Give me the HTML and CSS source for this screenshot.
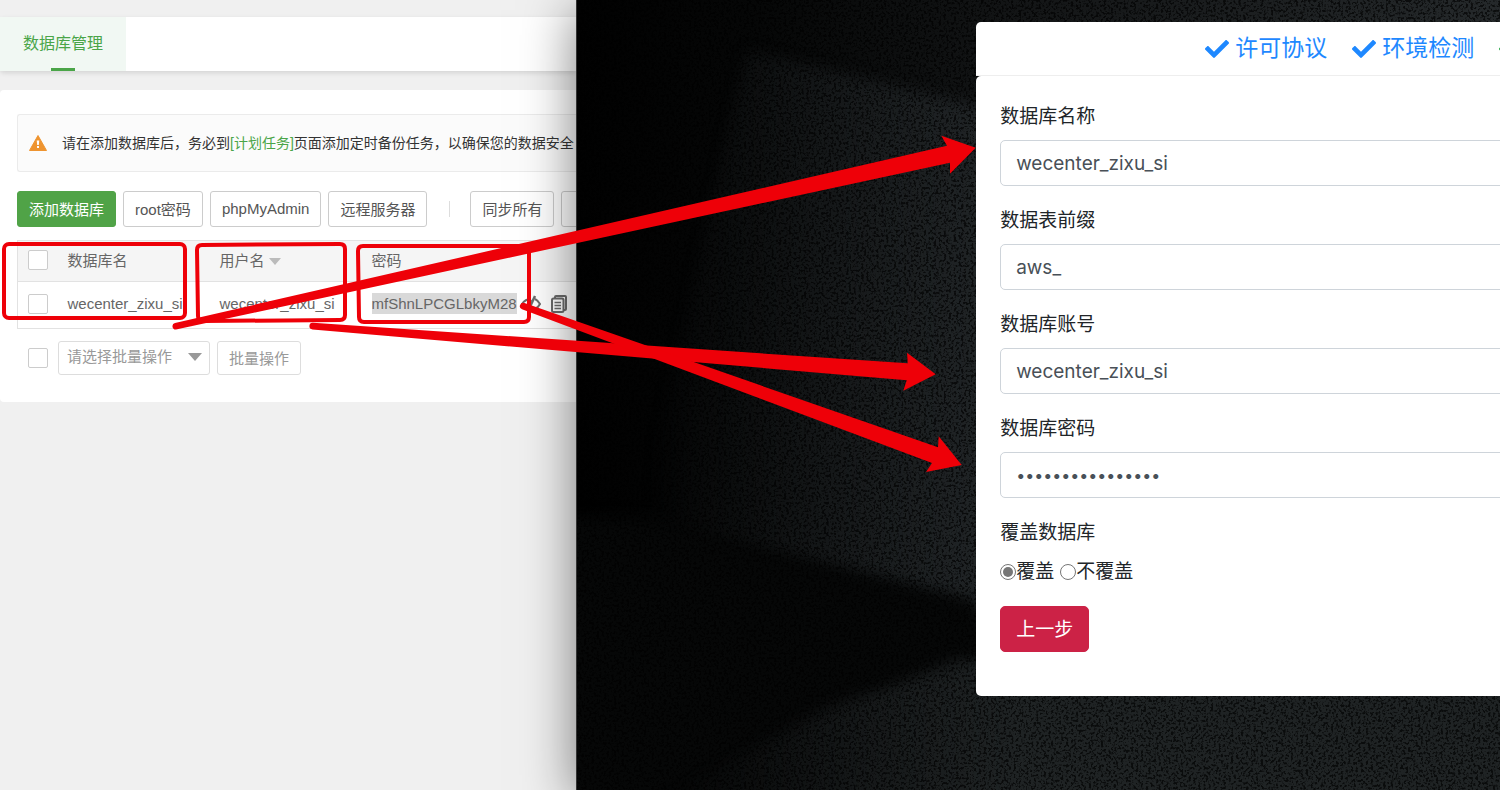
FILE: index.html
```
<!DOCTYPE html>
<html lang="zh-CN">
<head>
<meta charset="UTF-8">
<meta name="viewport" content="width=device-width, initial-scale=1.0">
<title>数据库管理</title>
<link rel="stylesheet" href="styles.css">
</head>
<body>

<div class="stage">

  <main class="panel">
    <nav class="tabs">
      <a class="tab active" href="#">数据库管理</a>
    </nav>

    <section class="card">
      <div class="notice">
        <svg class="warn" viewBox="0 0 18 16">
          <path d="M9 0.5 L17.5 15.5 H0.5 Z" fill="#ee9430" stroke="#ee9430" stroke-linejoin="round"/>
          <path d="M7.7 5.5 h2.6 l-.5 4.6 h-1.6 z M8 11 h2 v2 h-2 z" fill="#fff"/>
        </svg>
        <p>请在添加数据库后，务必到<a href="#">[计划任务]</a>页面添加定时备份任务，以确保您的数据安全</p>
      </div>

      <div class="toolbar">
        <button class="btn btn-green">添加数据库</button>
        <button class="btn">root密码</button>
        <button class="btn">phpMyAdmin</button>
        <button class="btn">远程服务器</button>
        <span class="divider"></span>
        <button class="btn">同步所有</button>
        <button class="btn btn-more" aria-label="更多"></button>
      </div>

      <table class="db-table">
        <colgroup>
          <col class="col-check">
          <col class="col-text">
          <col class="col-text">
          <col>
        </colgroup>
        <thead>
          <tr>
            <th><input type="checkbox" class="check" aria-label="全选"></th>
            <th>数据库名</th>
            <th>用户名 <span class="caret"></span></th>
            <th>密码</th>
          </tr>
        </thead>
        <tbody>
          <tr>
            <td><input type="checkbox" class="check" aria-label="wecenter_zixu_si"></td>
            <td>wecenter_zixu_si</td>
            <td>wecenter_zixu_si</td>
            <td>
              <div class="secret">
                <span class="selected">mfShnLPCGLbkyM28</span>
                <svg class="eye" viewBox="0 0 20 18" fill="none" stroke="#6b6b6b" stroke-width="2">
                  <path d="M7 14 C4 13 2 11 1 9 C3 6 6 4 10 4"/>
                  <path d="M14 4 C17 5.500 18 7.500 19 9 C18 11 16 13 14 14"/>
                  <path d="M14 1 L7 16" stroke-width="2.500"/>
                  <path d="M6 9 a4 4 0 0 1 5-4 l-3 7 z" fill="#6b6b6b" stroke="none"/>
                </svg>
                <svg class="copy" viewBox="0 0 16 18" fill="none" stroke="#6b6b6b" stroke-width="2">
                  <path d="M4 3 V2 Q4 1 5 1 H14 Q15 1 15 2 V14 Q15 15 14 15 H13"/>
                  <rect x="1" y="3.500" width="11.500" height="13.500" rx="1.500"/>
                  <path d="M3.500 7.500 H10 M3.500 10.500 H10 M3.500 13.500 H10" stroke-width="1.300"/>
                </svg>
              </div>
            </td>
          </tr>
        </tbody>
      </table>

      <div class="batch">
        <input type="checkbox" class="check" aria-label="批量选择">
        <div class="select-wrap">
          <select aria-label="批量操作">
            <option>请选择批量操作</option>
          </select>
        </div>
        <button class="btn btn-muted">批量操作</button>
      </div>
    </section>
  </main>

  <section class="installer">
    <svg class="backdrop" viewBox="0 0 924 790" preserveAspectRatio="none">
      <defs>
        <linearGradient id="base" x1="0" x2="1" y1="0" y2="0">
          <stop offset="0" stop-color="#010101"/>
          <stop offset=".2" stop-color="#060707"/>
          <stop offset=".5" stop-color="#141617"/>
          <stop offset="1" stop-color="#25292b"/>
        </linearGradient>
        <linearGradient id="beam" gradientUnits="userSpaceOnUse" x1="70" x2="420" y1="0" y2="0">
          <stop offset="0" stop-color="#1e2224" stop-opacity="0"/>
          <stop offset="1" stop-color="#212527"/>
        </linearGradient>
        <linearGradient id="floor" gradientUnits="userSpaceOnUse" x1="60" x2="440" y1="0" y2="0">
          <stop offset="0" stop-color="#191c1d" stop-opacity="0"/>
          <stop offset="1" stop-color="#1f2324"/>
        </linearGradient>
        <filter id="soft" color-interpolation-filters="sRGB">
          <feGaussianBlur stdDeviation="7"/>
        </filter>
        <filter id="grain" x="0" y="0" width="100%" height="100%">
          <feTurbulence type="fractalNoise" baseFrequency=".4" numOctaves="2" seed="4"/>
          <feColorMatrix values="0 0 0 0 0  0 0 0 0 0  0 0 0 0 0  6 0 0 0 -2.900"/>
        </filter>
      </defs>
      <rect width="924" height="790" fill="url(#base)"/>
      <g filter="url(#soft)">
        <path d="M170 50 L400 106 L924 230 V620 H400 L60 522 Z" fill="url(#beam)"/>
        <path d="M60 516 L400 600 L420 670 L250 700 L60 810 H-20 V516 Z" fill="#060707"/>
        <path d="M60 810 L250 710 L380 660 H940 V810 Z" fill="url(#floor)"/>
      </g>
      <rect width="924" height="790" filter="url(#grain)" opacity=".65"/>
    </svg>

    <div class="wizard">
      <header class="steps">
        <span class="step">
          <svg viewBox="0 0 512 512"><path fill="currentColor" d="M173.898 439.404l-166.400-166.400c-9.997-9.997-9.997-26.206 0-36.204l36.203-36.204c9.997-9.998 26.207-9.998 36.204 0L192 312.690 432.095 72.596c9.997-9.997 26.207-9.997 36.204 0l36.203 36.204c9.997 9.997 9.997 26.206 0 36.204l-294.400 294.401c-9.998 9.997-26.207 9.997-36.204-.001z"/></svg>
          许可协议
        </span>
        <span class="step">
          <svg viewBox="0 0 512 512"><path fill="currentColor" d="M173.898 439.404l-166.400-166.400c-9.997-9.997-9.997-26.206 0-36.204l36.203-36.204c9.997-9.998 26.207-9.998 36.204 0L192 312.690 432.095 72.596c9.997-9.997 26.207-9.997 36.204 0l36.203 36.204c9.997 9.997 9.997 26.206 0 36.204l-294.400 294.401c-9.998 9.997-26.207 9.997-36.204-.001z"/></svg>
          环境检测
        </span>
        <span class="step current">
          <svg viewBox="0 0 512 512"><path fill="currentColor" d="M173.898 439.404l-166.400-166.400c-9.997-9.997-9.997-26.206 0-36.204l36.203-36.204c9.997-9.998 26.207-9.998 36.204 0L192 312.690 432.095 72.596c9.997-9.997 26.207-9.997 36.204 0l36.203 36.204c9.997 9.997 9.997 26.206 0 36.204l-294.400 294.401c-9.998 9.997-26.207 9.997-36.204-.001z"/></svg>
        </span>
      </header>

      <form class="setup">
        <div class="field">
          <label for="dbname">数据库名称</label>
          <input type="text" id="dbname" value="wecenter_zixu_si">
        </div>
        <div class="field">
          <label for="prefix">数据表前缀</label>
          <input type="text" id="prefix" value="aws_">
        </div>
        <div class="field">
          <label for="dbuser">数据库账号</label>
          <input type="text" id="dbuser" value="wecenter_zixu_si">
        </div>
        <div class="field">
          <label for="dbpass">数据库密码</label>
          <input type="password" id="dbpass" value="mfShnLPCGLbkyM28">
        </div>
        <fieldset class="field">
          <legend>覆盖数据库</legend>
          <div class="radios">
            <label><input type="radio" name="cover" checked>覆盖</label>
            <label><input type="radio" name="cover">不覆盖</label>
          </div>
        </fieldset>
        <button type="button" class="btn-prev">上一步</button>
      </form>
    </div>
  </section>

  <!-- red boxes and arrows linking the two panels -->
  <svg class="marks" viewBox="0 0 1500 790" preserveAspectRatio="none">
    <g fill="none" stroke="#ee0008" stroke-width="4" stroke-linejoin="round">
      <rect x="4" y="244" width="181" height="74" rx="5"/>
      <path d="M202 245 L340 244 Q345 244 345 249 V315 Q345 320 340 320 L203 321 Q198 321 198 316 L197 250 Q197 245 202 245 Z"/>
      <path d="M363 246 H524 Q529 246 529 251 V317 Q529 322 524 322 H364 Q359 322 359 317 L358 251 Q358 246 363 246 Z"/>
    </g>
    <g fill="#ee0008">
      <path d="M175 323 L947 145.700 L941.300 135.700 L975.700 147.700 L950 173.700 V162.700 L176 329.500 A3.300 3.300 0 0 1 175 323 Z"/>
      <path d="M313 322.800 L907.700 363.300 L907 352.700 L935.700 374.300 L903.300 390.700 L906.700 380.300 L312.500 329.500 A3.300 3.300 0 0 1 313 322.800 Z"/>
      <path d="M524.500 303 L938 447.300 L938.700 436.300 L961.700 465 L926 472 L932 463 L522 309.300 A3.300 3.300 0 0 1 524.500 303 Z"/>
    </g>
  </svg>

</div>

</body>
</html>
```
FILE: styles.css
```
* {
  box-sizing: border-box;
}

body {
  margin: 0;
  font-family: "Liberation Sans", "Noto Sans CJK SC", sans-serif;
  font-size: 15px;
  color: #333;
  background: #f0f0f0;
}

button, input, select {
  font: inherit;
}

a {
  color: #4aa548;
  text-decoration: none;
}

.stage {
  position: relative;
  display: grid;
  grid-template-columns: 38.4% 1fr;
  min-height: 100vh;
  overflow: hidden;
}

/* left side */
.panel {
  min-width: 0;
  padding-top: 17px;
  overflow: hidden;
  white-space: nowrap;
}

.tabs {
  display: flex;
  height: 54px;
  background: #fff;
  border-radius: 4px 0 0 4px;
  box-shadow: 0 2px 5px rgba(0, 0, 0, .12);
}

.tab {
  display: flex;
  flex-direction: column;
  align-items: center;
  justify-content: space-between;
  padding: 0 23px;
  font-size: 16px;
  line-height: 54px;
  background: #f1f8f3;
}

.tab.active::after {
  content: "";
  width: 24px;
  height: 3px;
  margin-top: -3px;
  background: #4aa548;
}

.card {
  margin-top: 19px;
  padding: 24px 0 27px 17px;
  background: #fff;
  border-radius: 4px 0 0 4px;
}

.notice {
  display: flex;
  align-items: center;
  gap: 15px;
  height: 58px;
  padding-left: 11px;
  font-size: 14px;
  background: #fbfbfb;
  border: 1px solid #ebebeb;
  border-right: 0;
  border-radius: 3px 0 0 3px;
}

.notice p {
  margin: 0;
  padding-bottom: 2px;
}

.warn {
  flex: none;
  width: 18px;
  height: 16px;
}

.toolbar {
  display: flex;
  align-items: center;
  gap: 7px;
  margin: 19px 0 13px;
}

.btn {
  flex: none;
  height: 36px;
  padding: 0 11px 2px;
  color: #555;
  background: #fff;
  border: 1px solid #ccc;
  border-radius: 3px;
}

.btn-green {
  color: #fff;
  background: #50a347;
  border-color: #50a347;
}

.btn-more {
  width: 70px;
}

.divider {
  flex: none;
  width: 1px;
  height: 16px;
  margin: 0 13px 0 15px;
  background: #ddd;
}

.db-table {
  width: 700px;
  table-layout: fixed;
  border-collapse: collapse;
  border: 1px solid #e2e2e2;
  color: #666;
}

.col-check {
  width: 40px;
}

.col-text {
  width: 152px;
}

.db-table th,
.db-table td {
  padding: 0 0 3px 10px;
  font-weight: normal;
  text-align: left;
  border-bottom: 1px solid #e2e2e2;
}

.db-table th {
  height: 41px;
  background: #f5f5f5;
}

.db-table td {
  height: 47px;
}

.check {
  display: block;
  flex: none;
  appearance: none;
  width: 20px;
  height: 20px;
  margin: 0;
  background: #fff;
  border: 1px solid #ccc;
  border-radius: 2px;
}

.caret {
  display: inline-block;
  border: 6px solid transparent;
  border-top: 7px solid #bbb;
  border-bottom: 0;
  vertical-align: 1px;
}

.secret {
  display: flex;
  align-items: center;
}

.selected {
  line-height: 21px;
  background: #d9d9d9;
}

.eye {
  width: 20px;
  height: 18px;
  margin: 0 10px 0 4px;
}

.copy {
  width: 16px;
  height: 18px;
}

.batch {
  display: flex;
  align-items: center;
  gap: 7px;
  margin-top: 12px;
  padding-left: 11px;
}

.select-wrap {
  position: relative;
  width: 152px;
  margin-left: 3px;
}

.select-wrap::after {
  content: "";
  position: absolute;
  top: 12px;
  right: 8px;
  border: 7px solid transparent;
  border-top: 8px solid #999;
  border-bottom: 0;
  pointer-events: none;
}

.select-wrap select {
  display: block;
  appearance: none;
  width: 100%;
  height: 34px;
  padding: 0 8px 3px;
  color: #999;
  background: #fff;
  border: 1px solid #ddd;
  border-radius: 3px;
}

.btn-muted {
  height: 34px;
  color: #999;
  border-color: #ddd;
}

/* right side */
.installer {
  position: relative;
  min-width: 0;
  padding: 22px 0 0 43.2%;
  background: #000;
  border-left: 1px solid #333;
  box-shadow: 0 10px 50px rgba(0, 0, 0, .5);
}

.backdrop {
  position: absolute;
  inset: 0;
  width: 100%;
  height: 100%;
}

.wizard {
  position: relative;
  width: 720px;
  font-family: Inter, "Noto Sans CJK SC", sans-serif;
  font-size: 19px;
  line-height: 29px;
  color: #212529;
}

.steps {
  display: flex;
  align-items: center;
  gap: 25px;
  height: 54px;
  padding-left: 229px;
  font-size: 23px;
  color: #1e88ff;
  background: #fff;
  border-bottom: 1px solid #eee;
  border-radius: 5px 5px 0 0;
}

.step {
  display: flex;
  align-items: center;
  gap: 6px;
}

.step svg {
  width: 24px;
  height: 24px;
}

.step.current {
  color: #28a745;
}

.setup {
  padding: 26px 24px 44px;
  background: #fff;
  border-radius: 5px;
}

.field {
  margin: 0 0 20px;
  padding: 0;
  border: 0;
}

.field > label,
.field legend {
  display: block;
  margin-bottom: 9px;
  padding: 0;
}

.field > input {
  display: block;
  width: 100%;
  height: 46px;
  padding: 0 15px;
  color: #495057;
  border: 1px solid #ced4da;
  border-radius: 5px;
}

.field > input[type="password"] {
  font-size: 16px;
}

.radios {
  display: flex;
  gap: 6px;
  padding-top: 1px;
}

.radios label {
  display: flex;
  align-items: center;
}

.radios input {
  appearance: none;
  width: 16px;
  height: 16px;
  margin: 0;
  padding: 2px;
  background: #fff content-box;
  border: 1px solid #767676;
  border-radius: 50%;
}

.radios input:checked {
  background-color: #767676;
}

.btn-prev {
  height: 46px;
  padding: 0 15px;
  color: #fff;
  background: #cc2246;
  border: 1px solid #cc2246;
  border-radius: 5px;
}

.marks {
  position: absolute;
  inset: 0;
  width: 100%;
  height: 100%;
  pointer-events: none;
}
```
